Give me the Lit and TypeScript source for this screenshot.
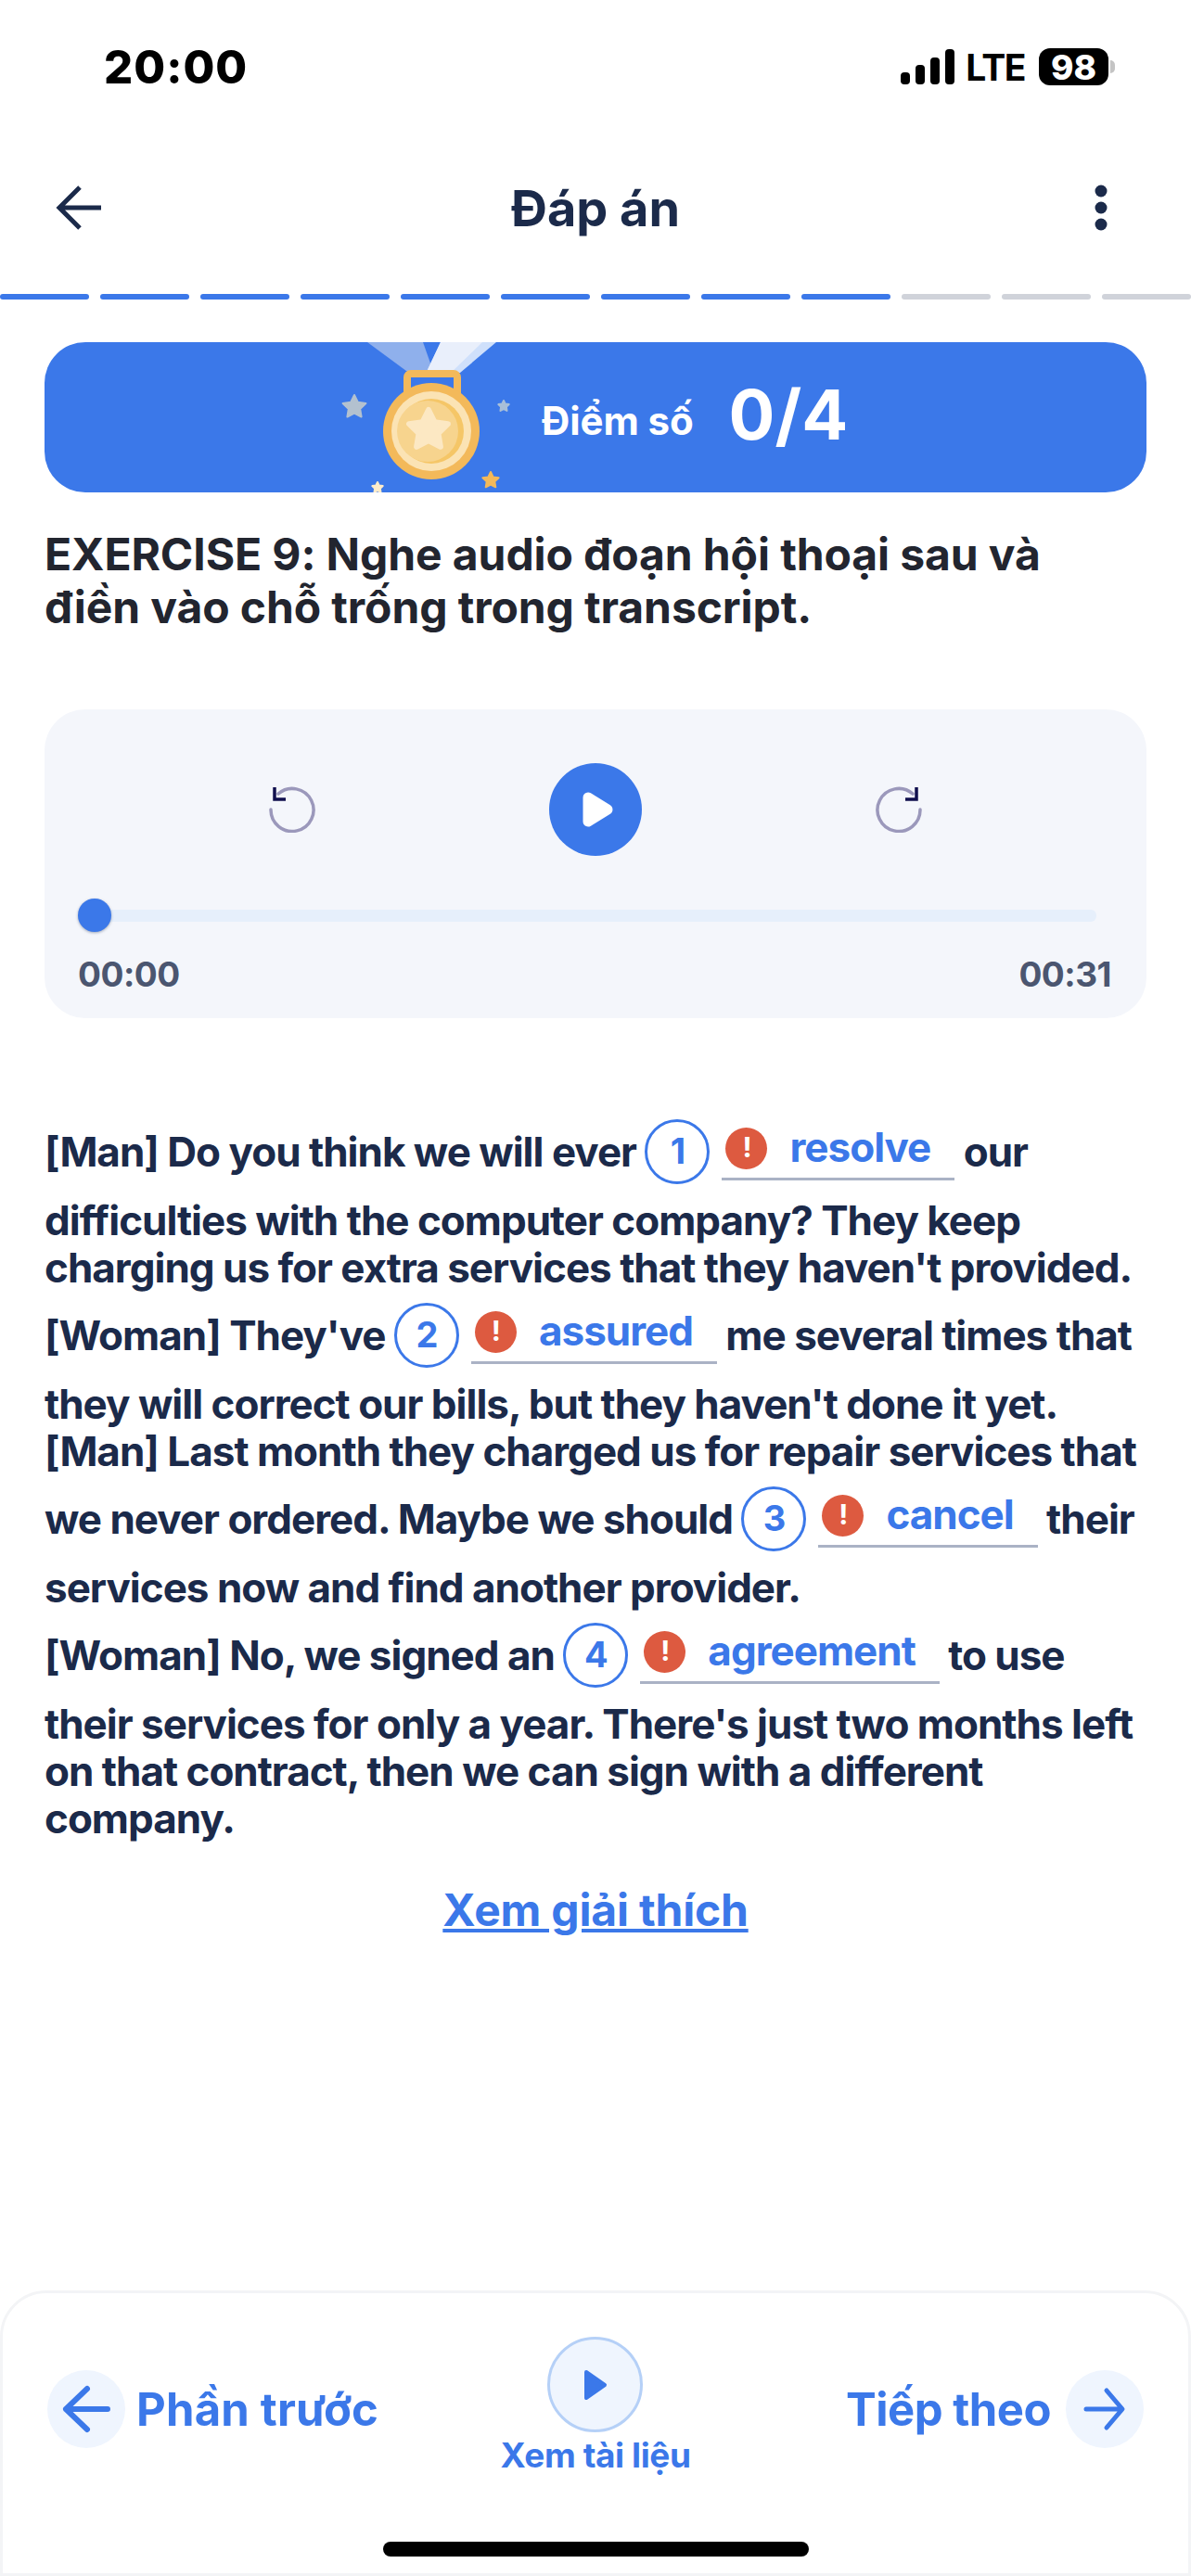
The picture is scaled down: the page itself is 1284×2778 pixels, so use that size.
import { LitElement, html, css, svg } from 'lit';
import { customElement } from 'lit/decorators.js';

function starPoints(cx: number, cy: number, r: number) {
  const pts: string[] = [];
  for (let i = 0; i < 10; i++) {
    const rad = i % 2 === 0 ? r : r * 0.5;
    const a = -Math.PI / 2 + (i * Math.PI) / 5;
    pts.push(`${(cx + rad * Math.cos(a)).toFixed(1)},${(cy + rad * Math.sin(a)).toFixed(1)}`);
  }
  return pts.join(' ');
}

function star(cx: number, cy: number, r: number, fill: string, round = 2) {
  return svg`<polygon points=${starPoints(cx, cy, r)} fill=${fill} stroke=${fill} stroke-width=${round} stroke-linejoin="round"></polygon>`;
}

const medal = html`<svg class="medal" width="200" height="162" viewBox="0 0 200 162">
  <polygon points="36,0 96,0 108,34 78,31" fill="#8fb0ec"></polygon>
  <polygon points="115,0 175,0 136,33 98,36" fill="#cfe0fb"></polygon>
  <polygon points="115,0 160,0 124,35 98,36" fill="#e9effb"></polygon>
  <rect x="79" y="34" width="54" height="40" rx="4" fill="none" stroke="#f3b95a" stroke-width="8"></rect>
  <circle cx="105" cy="96" r="52" fill="#f3b95a"></circle>
  <circle cx="105" cy="96" r="43" fill="#fbe3b4"></circle>
  <circle cx="105" cy="96" r="35" fill="#f5c667"></circle>
  <circle cx="101" cy="96" r="33" fill="#f7d48e"></circle>
  ${star(102, 95, 22, '#fce8c3', 6)}
  ${star(22, 70, 13, '#b3c1cf')}
  ${star(183, 69, 6, '#a9bfd8')}
  ${star(47, 157, 6, '#fdeccb')}
  ${star(169, 149, 9, '#f3b95a')}
</svg>`;

const skipIcon = (flip: boolean) => html`<svg class=${flip ? 'flip' : ''} width="50" height="50" viewBox="0 0 50 50" fill="none">
  <path d="M10 8 A23 23 0 1 1 2 25" stroke="#9b98bb" stroke-width="3.5" stroke-linecap="round"></path>
  <path d="M6 1 V14 H18" stroke="#100f4e" stroke-width="3.5"></path>
</svg>`;

const blank = (n: number, word: string) => html`<span class="gap"
  ><span class="num">${n}</span
  ><span class="answer"
    ><span class="err">!</span><span class="word">${word}</span></span
  ></span
>`;

@customElement('app-root')
export class AppRoot extends LitElement {
  static styles = css`
    :host {
      display: flex;
      flex-direction: column;
      min-height: 2778px;
      background: #fff;
      font-family: Inter, 'Noto Sans', sans-serif;
      color: #1b2a4a;
    }
    .status {
      height: 140px;
      display: flex;
      align-items: center;
      justify-content: space-between;
      padding: 4px 82px 0 112px;
      box-sizing: border-box;
      color: #000;
    }
    .time {
      font-size: 49px;
      font-weight: 800;
      letter-spacing: 1px;
    }
    .sys {
      display: flex;
      align-items: center;
    }
    .lte {
      font-size: 39px;
      font-weight: 700;
      letter-spacing: -1.5px;
      margin: 0 15px 0 12px;
    }
    .battery {
      width: 75px;
      height: 40px;
      border-radius: 12px;
      background: #000;
      color: #fff;
      font-size: 37px;
      font-weight: 800;
      display: flex;
      align-items: center;
      justify-content: center;
    }
    .nub {
      width: 5px;
      height: 14px;
      margin-left: 2px;
      border-radius: 0 5px 5px 0;
      background: #c4c4c4;
    }
    .header {
      height: 168px;
      display: flex;
      align-items: center;
      justify-content: space-between;
      padding: 0 60px;
    }
    .header h1 {
      margin: 0;
      font-size: 54px;
      font-weight: 700;
    }
    .progress {
      display: flex;
      gap: 12px;
      margin-top: 9px;
    }
    .progress span {
      flex: 1;
      height: 6px;
      border-radius: 3px;
      background: #d0d3da;
    }
    .progress span.done {
      background: #3b78e9;
    }
    .main {
      padding: 0 48px;
    }
    .banner {
      margin-top: 46px;
      height: 162px;
      border-radius: 44px;
      background: #3b78e9;
      color: #fff;
      display: flex;
      align-items: center;
      padding-left: 312px;
      overflow: hidden;
    }
    .banner .label {
      margin: 6px 0 0 24px;
      font-size: 42px;
      font-weight: 700;
      letter-spacing: -0.1px;
    }
    .banner .score {
      margin: 0 0 6px 38px;
      font-size: 74px;
      font-weight: 700;
    }
    .title {
      margin: 38px 0 0;
      max-width: 1100px;
      font-size: 48px;
      line-height: 57px;
      font-weight: 700;
      letter-spacing: -0.1px;
      color: #22252f;
    }
    .player {
      margin-top: 82px;
      height: 333px;
      box-sizing: border-box;
      padding: 58px 38px 0 36px;
      border-radius: 44px;
      background: #f4f6fb;
    }
    .controls {
      display: flex;
      align-items: center;
      justify-content: center;
      gap: 252px;
      padding-left: 2px;
    }
    .flip {
      transform: scaleX(-1);
    }
    .play {
      width: 100px;
      height: 100px;
      display: block;
    }
    .slider {
      position: relative;
      height: 36px;
      margin: 46px 16px 0 0;
      display: flex;
      align-items: center;
    }
    .track {
      flex: 1;
      height: 13px;
      border-radius: 6px;
      background: #e6effb;
    }
    .thumb {
      position: absolute;
      left: 0;
      top: 0;
      width: 36px;
      height: 36px;
      border-radius: 50%;
      background: #3b78e9;
      box-shadow: 0 1px 3px rgba(30, 50, 90, 0.4);
    }
    .times {
      display: flex;
      justify-content: space-between;
      margin-top: 24px;
      font-size: 37px;
      line-height: 44px;
      font-weight: 700;
      letter-spacing: -0.5px;
      color: #4b5670;
    }
    .transcript {
      margin: 97px 0 0;
      font-size: 44px;
      line-height: 51px;
      font-weight: 650;
      letter-spacing: -1px;
    }
    .gap {
      display: inline-flex;
      align-items: baseline;
      gap: 13px;
      padding: 14.5px 0 11.5px;
    }
    .num {
      display: inline-flex;
      align-items: center;
      justify-content: center;
      box-sizing: border-box;
      width: 70px;
      height: 70px;
      border: 3px solid #3b78e9;
      border-radius: 50%;
      color: #3b78e9;
      font-size: 38px;
      transform: translateY(-3px);
    }
    .answer {
      display: inline-flex;
      align-items: baseline;
      padding: 0 26px 4.5px 4px;
      border-bottom: 3px solid #aab2c5;
      transform: translateY(-3px);
    }
    .err {
      align-self: flex-start;
      width: 45px;
      height: 45px;
      margin: 1.5px 24px 0 0;
      border-radius: 50%;
      background: #dd5a40;
      color: #fff;
      font-size: 30px;
      line-height: 43px;
      text-align: center;
    }
    .word {
      color: #3b78e9;
      transform: translateY(-2px);
    }
    .explain {
      margin-top: 44px;
      text-align: center;
      font-size: 48px;
      line-height: 58px;
      font-weight: 700;
      letter-spacing: -0.2px;
      color: #3b78e9;
      text-decoration: underline;
    }
    .footer {
      margin-top: auto;
      box-sizing: border-box;
      height: 308px;
      border: 3px solid #f3f4f6;
      border-radius: 50px 50px 0 0;
      padding-top: 47px;
      color: #3b78e9;
    }
    .nav {
      display: grid;
      grid-template-columns: 1fr auto 1fr;
      height: 150px;
      font-weight: 700;
    }
    .side {
      display: flex;
      align-items: center;
      height: 84px;
      margin-top: 36px;
      font-size: 49px;
      letter-spacing: -0.5px;
    }
    .side.prev {
      padding-left: 48px;
      gap: 12px;
      letter-spacing: 0.2px;
    }
    .side.next {
      justify-content: flex-end;
      padding-right: 48px;
      gap: 16px;
    }
    .round {
      display: block;
      width: 84px;
      height: 84px;
      border-radius: 50%;
      background: #eff5fe;
    }
    .center {
      display: flex;
      flex-direction: column;
      align-items: center;
      font-size: 37px;
      line-height: 44px;
      letter-spacing: -0.4px;
    }
    .doc {
      box-sizing: border-box;
      width: 103px;
      height: 103px;
      margin-bottom: 3px;
      border: 3px solid #b5d0f7;
      border-radius: 50%;
      background: #eff5fe;
      display: flex;
      align-items: center;
      justify-content: center;
    }
    .home {
      width: 459px;
      height: 16px;
      margin: 71px auto 0;
      border-radius: 8px;
      background: #000;
    }
  `;

  render() {
    return html`
      <div class="status">
        <span class="time">20:00</span>
        <div class="sys">
          <svg width="58" height="38" viewBox="0 0 58 38">
            <rect x="0" y="25" width="10" height="13" rx="4"></rect>
            <rect x="16" y="17" width="10" height="21" rx="4"></rect>
            <rect x="32" y="9" width="10" height="29" rx="4"></rect>
            <rect x="48" y="0" width="10" height="38" rx="4"></rect>
          </svg>
          <span class="lte">LTE</span>
          <span class="battery">98</span>
          <span class="nub"></span>
        </div>
      </div>
      <div class="header">
        <svg width="52" height="52" viewBox="0 0 52 52" fill="none" stroke="#1b2a4a" stroke-width="5">
          <path d="M49 26 H5 M26 4 L4 26 L26 48"></path>
        </svg>
        <h1>Đáp án</h1>
        <svg width="52" height="52" viewBox="0 0 52 52" fill="#1b2a4a">
          <circle cx="15" cy="8" r="6.5"></circle>
          <circle cx="15" cy="26" r="6.5"></circle>
          <circle cx="15" cy="44" r="6.5"></circle>
        </svg>
      </div>
      <div class="progress">
        ${Array.from({ length: 12 }, (_, i) => html`<span class=${i < 9 ? 'done' : ''}></span>`)}
      </div>
      <div class="main">
        <div class="banner">
          ${medal}
          <span class="label">Điểm số</span>
          <span class="score">0/4</span>
        </div>
        <p class="title">EXERCISE 9: Nghe audio đoạn hội thoại sau và điền vào chỗ trống trong transcript.</p>
        <div class="player">
          <div class="controls">
            ${skipIcon(false)}
            <svg class="play" viewBox="0 0 100 100">
              <circle cx="50" cy="50" r="50" fill="#3b78e9"></circle>
              <path d="M42 37 L63 50 L42 63 Z" fill="#fff" stroke="#fff" stroke-width="11" stroke-linejoin="round"></path>
            </svg>
            ${skipIcon(true)}
          </div>
          <div class="slider"><div class="track"></div><div class="thumb"></div></div>
          <div class="times"><span>00:00</span><span>00:31</span></div>
        </div>
        <p class="transcript">
          [Man] Do you think we will ever ${blank(1, 'resolve')} our difficulties with the computer company? They keep
          charging us for extra services that they haven't provided.<br />
          [Woman] They've ${blank(2, 'assured')} me several times that they will correct our bills, but they haven't done it yet.<br />
          [Man] Last month they charged us for repair services that we never ordered. Maybe we should ${blank(3, 'cancel')} their
          services now and find another provider.<br />
          [Woman] No, we signed an ${blank(4, 'agreement')} to use their services for only a year. There's just two months left
          on that contract, then we can sign with a different company.
        </p>
        <div class="explain">Xem giải thích</div>
      </div>
      <div class="footer">
        <div class="nav">
          <div class="side prev">
            <svg class="round" viewBox="0 0 84 84" fill="none" stroke="#3b78e9" stroke-width="6" stroke-linecap="round" stroke-linejoin="round">
              <path d="M65 42 H20 M43 20 L20 42 L43 64"></path>
            </svg>
            <span>Phần trước</span>
          </div>
          <div class="center">
            <div class="doc">
              <svg width="34" height="34" viewBox="0 0 34 34" fill="#3b78e9" stroke="#3b78e9" stroke-width="4" stroke-linejoin="round">
                <path d="M7 3 L27 17 L7 31 Z"></path>
              </svg>
            </div>
            <span>Xem tài liệu</span>
          </div>
          <div class="side next">
            <span>Tiếp theo</span>
            <svg class="round" viewBox="0 0 84 84" fill="none" stroke="#3b78e9" stroke-width="5" stroke-linecap="round" stroke-linejoin="round">
              <path d="M22 42 H60 M44 22 L61 42 L44 62"></path>
            </svg>
          </div>
        </div>
        <div class="home"></div>
      </div>
    `;
  }
}
